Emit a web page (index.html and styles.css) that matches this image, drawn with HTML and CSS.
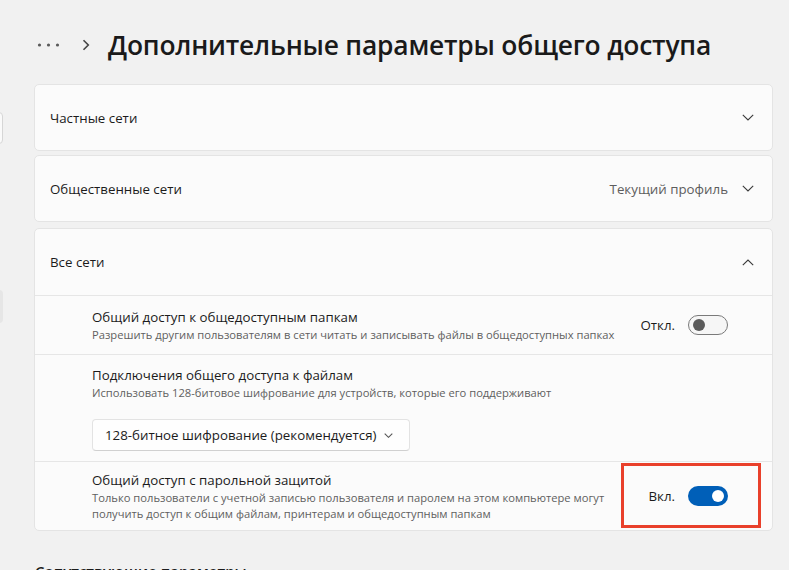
FILE: index.html
```html
<!DOCTYPE html>
<html lang="ru">
<head>
<meta charset="utf-8">
<link rel="stylesheet" href="styles.css">
</head>
<body>
<div class="layout">
  <aside class="sidebar">
    <div class="search-stub"></div>
    <div class="nav-stub"></div>
  </aside>
  <main class="main">
    <header class="page-header">
      <svg class="dots" width="24" height="6" viewBox="0 0 24 6"><circle cx="2.5" cy="3" r="1.6"/><circle cx="11.5" cy="3" r="1.6"/><circle cx="20.5" cy="3" r="1.6"/></svg>
      <svg class="crumb-chevron" width="8" height="12" viewBox="0 0 8 12"><path d="M1.5 1.2 L6.3 6 L1.5 10.8"/></svg>
      <h1 class="title">Дополнительные параметры общего доступа</h1>
    </header>

    <section class="card">
      <div class="card-head">
        <span class="head-label">Частные сети</span>
        <svg class="chev" width="12" height="7" viewBox="0 0 12 7"><path d="M0.8 0.8 L6 6 L11.2 0.8"/></svg>
      </div>
    </section>

    <section class="card card-public">
      <div class="card-head">
        <span class="head-label">Общественные сети</span>
        <span class="head-right">
          <span class="head-status">Текущий профиль</span>
          <svg class="chev" width="12" height="7" viewBox="0 0 12 7"><path d="M0.8 0.8 L6 6 L11.2 0.8"/></svg>
        </span>
      </div>
    </section>

    <section class="card card-all">
      <div class="card-head">
        <span class="head-label">Все сети</span>
        <svg class="chev" width="12" height="7" viewBox="0 0 12 7"><path d="M0.8 6.2 L6 1 L11.2 6.2"/></svg>
      </div>
      <div class="row row-one">
        <div class="row-text">
          <div class="row-title">Общий доступ к общедоступным папкам</div>
          <div class="row-desc">Разрешить другим пользователям в сети читать и записывать файлы в общедоступных папках</div>
        </div>
        <div class="control">
          <span class="state">Откл.</span>
          <span class="toggle toggle-off"><span class="knob"></span></span>
        </div>
      </div>
      <div class="row row-two">
        <div class="row-title">Подключения общего доступа к файлам</div>
        <div class="row-desc">Использовать 128-битовое шифрование для устройств, которые его поддерживают</div>
        <div class="select">
          <span>128-битное шифрование (рекомендуется)</span>
          <svg class="select-chev" width="9" height="5" viewBox="0 0 9 5"><path d="M0.7 0.7 L4.5 4.3 L8.3 0.7"/></svg>
        </div>
      </div>
      <div class="row row-three">
        <div class="row-text">
          <div class="row-title">Общий доступ с парольной защитой</div>
          <div class="row-desc">Только пользователи с учетной записью пользователя и паролем на этом компьютере могут<br>получить доступ к общим файлам, принтерам и общедоступным папкам</div>
        </div>
        <div class="control">
          <span class="state">Вкл.</span>
          <span class="toggle toggle-on"><span class="knob"></span></span>
        </div>
        <div class="highlight"></div>
      </div>
    </section>

    <h2 class="section-title">Сопутствующие параметры</h2>
  </main>
</div>
</body>
</html>
```

FILE: styles.css
```css
* { box-sizing: border-box; }
html, body { margin: 0; padding: 0; }
body {
  background: #f1f1f1;
  font-family: "Open Sans", "Noto Sans", sans-serif;
  color: #1b1b1b;
  width: 789px;
  height: 570px;
  overflow: hidden;
}
.layout { display: flex; }
.sidebar {
  width: 3px;
  flex: none;
  overflow: hidden;
  padding-top: 112px;
}
.search-stub {
  width: 10px;
  height: 32px;
  margin-left: -7px;
  border: 1px solid #d6d6d6;
  border-radius: 4px;
  background: #fafafa;
}
.nav-stub {
  margin-top: 146px;
  width: 10px;
  height: 33px;
  margin-left: -7px;
  background: #e6e6e6;
  border-radius: 4px;
}
.main {
  margin-left: 31px;
  width: 739px;
}
.page-header {
  height: 84px;
  display: flex;
  align-items: center;
  padding-top: 5px;
}
.dots { fill: #5a5a5a; margin-left: 3px; }
.crumb-chevron { fill: none; stroke: #444; stroke-width: 1.6; margin-left: 21px; }
.title {
  margin: 0 0 0 18px;
  font-size: 26.4px;
  font-weight: 600;
  letter-spacing: -0.2px;
  color: #1a1a1a;
}
.card {
  background: #fbfbfb;
  border: 1px solid #e4e4e4;
  border-radius: 5px;
  margin-bottom: 4px;
}
.card-public { margin-bottom: 6px; }
.card-head {
  height: 65px;
  display: flex;
  align-items: center;
  justify-content: space-between;
  padding: 0 18px 0 15px;
  font-size: 13.3px;
}
.card-all .card-head { height: 66px; }
.head-right { display: flex; align-items: center; gap: 14px; }
.head-status { color: #5d5d5d; }
.chev { fill: none; stroke: #3a3a3a; stroke-width: 1.1; }
.row {
  border-top: 1px solid #e6e6e6;
  padding: 0 44px 0 57px;
}
.row-one, .row-three {
  display: flex;
  align-items: center;
  justify-content: space-between;
  position: relative;
}
.row-one { height: 59px; }
.row-three { height: 69px; padding-bottom: 1px; }
.row-two { padding-top: 10px; padding-bottom: 10px; }
.row-title { font-size: 13.3px; line-height: 20px; }
.row-desc { font-size: 11.2px; line-height: 16px; color: #5f5f5f; }
.control { display: flex; align-items: center; gap: 13px; font-size: 13.3px; }
.toggle {
  width: 40px;
  height: 20px;
  border-radius: 10px;
  display: flex;
  align-items: center;
  padding: 0 4px;
}
.toggle-off {
  border: 1px solid #7a7a7a;
  background: #f6f6f6;
}
.toggle-off .knob { width: 12px; height: 12px; border-radius: 50%; background: #5b5b5b; }
.toggle-on {
  background: #005fb8;
  justify-content: flex-end;
}
.toggle-on .knob { width: 12px; height: 12px; border-radius: 50%; background: #fff; }
.select {
  margin-top: 18px;
  width: 318px;
  height: 32px;
  display: flex;
  align-items: center;
  justify-content: space-between;
  padding: 0 16px 0 12px;
  border: 1px solid #e3e3e3;
  border-bottom-color: #d0d0d0;
  border-radius: 4px;
  background: #fefefe;
  font-size: 13.3px;
}
.select-chev { fill: none; stroke: #555; stroke-width: 1.1; }
.highlight {
  position: absolute;
  left: 586px;
  top: 1px;
  width: 140px;
  height: 65px;
  border: 3px solid #e9402b;
  pointer-events: none;
}
.section-title {
  margin: 30px 0 0 1px;
  font-size: 15px;
  font-weight: 600;
}
```
